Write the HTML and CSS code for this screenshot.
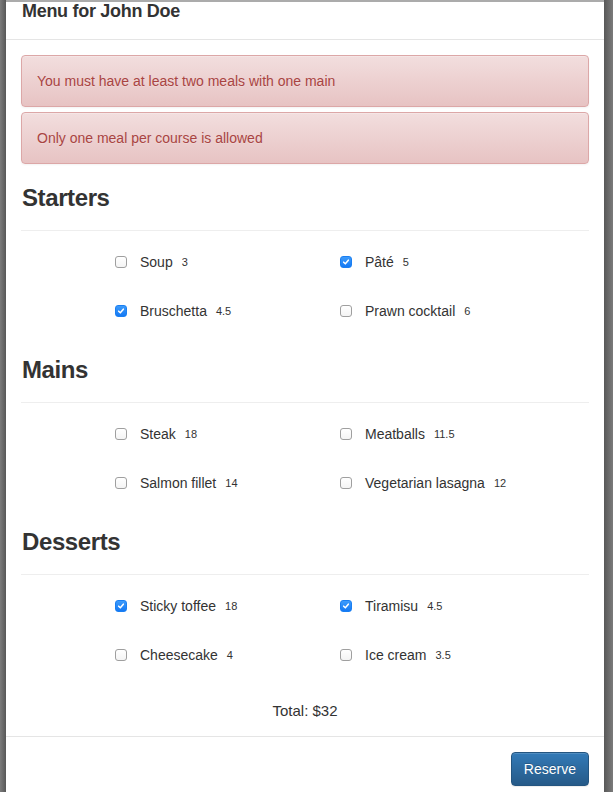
FILE: index.html
```html
<!DOCTYPE html>
<html lang="en">
<head>
<meta charset="utf-8">
<title>Menu for John Doe</title>
<link rel="stylesheet" href="styles.css">
</head>
<body>
<div class="modal">
  <div class="modal-header">
    <h4 class="modal-title">Menu for John Doe</h4>
  </div>
  <div class="modal-body">
    <div class="alert">You must have at least two meals with one main</div>
    <div class="alert">Only one meal per course is allowed</div>

    <section class="course">
      <h3>Starters</h3>
      <hr>
      <div class="meals">
        <label class="meal"><span class="box"></span><span class="name">Soup</span><span class="price">3</span></label>
        <label class="meal"><span class="box checked"><svg viewBox="0 0 12 12"><path d="M3.2 6.2 L5.2 8.2 L8.8 3.8"/></svg></span><span class="name">Pâté</span><span class="price">5</span></label>
        <label class="meal"><span class="box checked"><svg viewBox="0 0 12 12"><path d="M3.2 6.2 L5.2 8.2 L8.8 3.8"/></svg></span><span class="name">Bruschetta</span><span class="price">4.5</span></label>
        <label class="meal"><span class="box"></span><span class="name">Prawn cocktail</span><span class="price">6</span></label>
      </div>
    </section>

    <section class="course">
      <h3>Mains</h3>
      <hr>
      <div class="meals">
        <label class="meal"><span class="box"></span><span class="name">Steak</span><span class="price">18</span></label>
        <label class="meal"><span class="box"></span><span class="name">Meatballs</span><span class="price">11.5</span></label>
        <label class="meal"><span class="box"></span><span class="name">Salmon fillet</span><span class="price">14</span></label>
        <label class="meal"><span class="box"></span><span class="name">Vegetarian lasagna</span><span class="price">12</span></label>
      </div>
    </section>

    <section class="course">
      <h3>Desserts</h3>
      <hr>
      <div class="meals">
        <label class="meal"><span class="box checked"><svg viewBox="0 0 12 12"><path d="M3.2 6.2 L5.2 8.2 L8.8 3.8"/></svg></span><span class="name">Sticky toffee</span><span class="price">18</span></label>
        <label class="meal"><span class="box checked"><svg viewBox="0 0 12 12"><path d="M3.2 6.2 L5.2 8.2 L8.8 3.8"/></svg></span><span class="name">Tiramisu</span><span class="price">4.5</span></label>
        <label class="meal"><span class="box"></span><span class="name">Cheesecake</span><span class="price">4</span></label>
        <label class="meal"><span class="box"></span><span class="name">Ice cream</span><span class="price">3.5</span></label>
      </div>
    </section>

    <div class="total">Total: $32</div>
  </div>
  <div class="modal-footer">
    <button class="btn-primary" type="button">Reserve</button>
  </div>
</div>
</body>
</html>
```

FILE: styles.css
```css
* { box-sizing: border-box; }

html, body {
  margin: 0;
  height: 792px;
  overflow: hidden;
}

body {
  background: linear-gradient(to right, #7b7b7b 0, #585858 6px, #585858 604px, #7b7b7b 613px);
  font-family: "Liberation Sans", Arial, sans-serif;
  font-size: 14px;
  line-height: 20px;
  color: #333;
}

.modal {
  margin: 0 9px 0 6px;
  background: #fff;
  border-top: 2px solid #ababab;
  min-height: 792px;
}

.modal-header {
  height: 38px;
  padding: 0 16px;
  border-bottom: 1px solid #e5e5e5;
}

.modal-title {
  margin: 0;
  font-size: 18px;
  line-height: 18px;
  font-weight: bold;
  letter-spacing: -0.3px;
}

.modal-body {
  padding: 15px;
}

.alert {
  padding: 15px;
  margin-bottom: 5px;
  border: 1px solid #dca7a7;
  border-radius: 4px;
  color: #a94442;
  background-image: linear-gradient(to bottom, #f2dede 0, #e7c3c3 100%);
  box-shadow: inset 0 1px 0 rgba(255, 255, 255, .25), 0 1px 2px rgba(0, 0, 0, .05);
  text-shadow: 0 1px 0 rgba(255, 255, 255, .2);
}

.course h3 {
  margin: 36px 0 0 1px;
  font-size: 24px;
  line-height: 26px;
  font-weight: bold;
  letter-spacing: -0.4px;
}

.alert + .alert + .course h3 { margin-top: 21px; }

.course hr {
  margin: 19px 0 21px;
  border: 0;
  border-top: 1px solid #eee;
}

.meals {
  display: grid;
  grid-template-columns: 225px 225px;
  row-gap: 29px;
  padding-left: 94px;
}

.meal {
  display: flex;
  align-items: center;
  height: 20px;
}

.box {
  width: 12px;
  height: 12px;
  border: 1px solid #9f9f9f;
  border-radius: 3px;
  background: linear-gradient(#fff, #f4f4f4);
  margin-right: 13px;
  flex: none;
  display: flex;
}

.box.checked {
  border-color: #1a7ff2;
  background: linear-gradient(#3d9bfb, #1479f4);
}

.box svg {
  width: 10px;
  height: 10px;
  fill: none;
  stroke: #fff;
  stroke-width: 1.8;
  stroke-linecap: round;
  stroke-linejoin: round;
}

.price {
  font-size: 11px;
  margin-left: 9px;
}

.total {
  margin-top: 36px;
  text-align: center;
  font-size: 15px;
}

.modal-footer {
  border-top: 1px solid #e5e5e5;
  padding: 15px;
  display: flex;
  justify-content: flex-end;
}

.btn-primary {
  font-family: "Liberation Sans", Arial, sans-serif;
  font-size: 14px;
  line-height: 20px;
  padding: 6px 12px;
  color: #fff;
  border: 1px solid #245580;
  border-radius: 4px;
  background-image: linear-gradient(to bottom, #337ab7 0, #265a88 100%);
  text-shadow: 0 -1px 0 rgba(0, 0, 0, .2);
  box-shadow: inset 0 1px 0 rgba(255, 255, 255, .15), 0 1px 1px rgba(0, 0, 0, .075);
  cursor: pointer;
}
```
